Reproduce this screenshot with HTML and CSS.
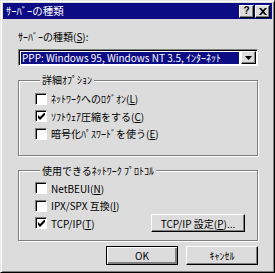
FILE: index.html
```html
<!DOCTYPE html>
<html lang="ja">
<head>
    <meta charset="UTF-8">
    <title>ｻｰﾊﾞｰの種類</title>
    <link rel="stylesheet" href="styles.css">
</head>
<body>
    <div class="dialog">
        <div class="titlebar">
            <span class="title">ｻｰﾊﾞｰの種類</span>
            <div class="title-buttons">
                <span class="tbtn help">?</span>
                <span class="tbtn close">
                    <svg width="8" height="7" viewBox="0 0 8 7"><path d="M0 0h2l2 2 2-2h2l-3 3.5 3 3.5h-2l-2-2-2 2h-2l3-3.5z" fill="#000"/></svg>
                </span>
            </div>
        </div>

        <div class="content">
            <div class="field-label">ｻｰﾊﾞｰの種類(<u>S</u>):</div>
            <div class="combo">
                <div class="combo-value"><span class="selected">PPP: Windows 95, Windows NT 3.5, ｲﾝﾀｰﾈｯﾄ</span></div>
                <div class="combo-arrow">
                    <svg width="7" height="4" viewBox="0 0 7 4"><path d="M0 0h7l-3.5 4z" fill="#000"/></svg>
                </div>
            </div>

            <fieldset class="group group-options">
                <legend>詳細ｵﾌﾟｼｮﾝ</legend>
                <div class="check-row"><span class="box"></span>ﾈｯﾄﾜｰｸへのﾛｸﾞｵﾝ(<u>L</u>)</div>
                <div class="check-row"><span class="box checked"><svg width="7" height="7" viewBox="0 0 7 7"><path d="M0 2v3l2 2 5-5v-3l-5 5z" fill="#000"/></svg></span>ｿﾌﾄｳｪｱ圧縮をする(<u>C</u>)</div>
                <div class="check-row"><span class="box"></span>暗号化ﾊﾟｽﾜｰﾄﾞを使う(<u>E</u>)</div>
            </fieldset>

            <fieldset class="group group-protocols">
                <legend>使用できるﾈｯﾄﾜｰｸ ﾌﾟﾛﾄｺﾙ</legend>
                <div class="check-row"><span class="box"></span>NetBEUI(<u>N</u>)</div>
                <div class="check-row"><span class="box"></span>IPX/SPX 互換(<u>I</u>)</div>
                <div class="check-row">
                    <span class="box checked"><svg width="7" height="7" viewBox="0 0 7 7"><path d="M0 2v3l2 2 5-5v-3l-5 5z" fill="#000"/></svg></span>TCP/IP(<u>T</u>)
                    <span class="button tcp-button">TCP/IP 設定(<u>P</u>)...</span>
                </div>
            </fieldset>

            <div class="actions">
                <span class="button default">OK</span>
                <span class="button">ｷｬﾝｾﾙ</span>
            </div>
        </div>
    </div>
</body>
</html>
```

FILE: styles.css
```css
* {
    box-sizing: border-box;
}
body {
    margin: 0;
    background: #dcdcdc;
    font-family: "Noto Sans CJK JP", "Liberation Sans", sans-serif;
    font-size: 10px;
    color: #000;
}
.dialog {
    width: 275px;
    height: 273px;
    padding: 2px;
    background: #dcdcdc;
    border: 1px solid;
    border-color: #e8e8e8 #000 #000 #e8e8e8;
    box-shadow: inset 1px 1px #fff, inset -1px -1px #808080;
}
.titlebar {
    height: 16px;
    background: #0c0c84;
    color: #fff;
    display: flex;
    align-items: center;
    justify-content: space-between;
    padding: 0 2px 0 3px;
}
.title {
    font-size: 10.5px;
    line-height: 16px;
}
.title-buttons {
    display: flex;
    gap: 1px;
}
.tbtn {
    width: 15px;
    height: 13px;
    background: #dcdcdc;
    border: 1px solid;
    border-color: #fff #000 #000 #fff;
    box-shadow: inset -1px -1px #808080;
    display: flex;
    align-items: center;
    justify-content: center;
    color: #000;
    font-family: "Liberation Sans", sans-serif;
    font-weight: bold;
    font-size: 10px;
    line-height: 1;
}
.content {
    padding: 0 14px 0 15px;
}
.field-label {
    margin-top: 11px;
    line-height: 13px;
}
.combo {
    margin-top: 6px;
    height: 17px;
    display: flex;
    background: #fff;
    border: 1px solid;
    border-color: #808080 #fff #fff #808080;
    box-shadow: inset 1px 1px #000;
    padding: 1px 1px 1px 2px;
}
.combo-value {
    flex: 1;
    display: flex;
    align-items: center;
}
.selected {
    background: #0c0c84;
    color: #fff;
    line-height: 12px;
    padding: 0 1px;
    flex: 1;
}
.combo-arrow {
    width: 15px;
    background: #dcdcdc;
    border: 1px solid;
    border-color: #fff #000 #000 #fff;
    box-shadow: inset -1px -1px #808080;
    display: flex;
    align-items: center;
    justify-content: center;
    margin-left: 2px;
}
.group {
    margin: 8px 0 0 0;
    padding: 4px 12px 12px 16px;
    border: 1px solid #808080;
    box-shadow: inset 1px 1px #fff, 1px 1px #fff;
    min-width: 0;
}
.group legend {
    padding: 0 2px;
    margin-left: 5px;
    line-height: 12px;
    background: #dcdcdc;
}
.group-protocols {
    margin-top: 9px;
    padding-top: 3px;
    padding-bottom: 8px;
}
.check-row {
    display: flex;
    align-items: center;
    height: 17.5px;
}
.box {
    width: 12px;
    height: 12px;
    margin-right: 4px;
    background: #fff;
    border: 1px solid;
    border-color: #808080 #fff #fff #808080;
    box-shadow: inset 1px 1px #000;
    display: flex;
    align-items: center;
    justify-content: center;
    padding: 1px 0 0 1px;
}
.button {
    height: 19px;
    background: #dcdcdc;
    border: 1px solid;
    border-color: #fff #000 #000 #fff;
    box-shadow: inset -1px -1px #808080;
    display: flex;
    align-items: center;
    justify-content: center;
}
.tcp-button {
    margin-left: auto;
    width: 94px;
    height: 18px;
}
.actions {
    display: flex;
    justify-content: flex-end;
    gap: 8px;
    margin-top: 5px;
}
.actions .button {
    width: 72px;
}
.button.default {
    border-color: #000;
    box-shadow: inset 1px 1px #fff, inset -2px -2px #808080;
}
```
